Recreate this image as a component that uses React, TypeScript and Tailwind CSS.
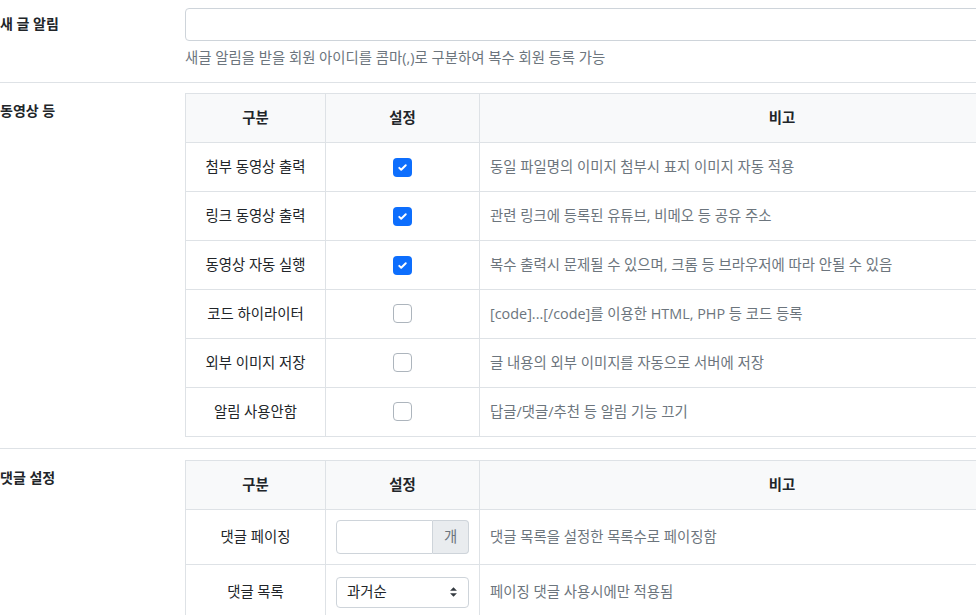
import React from 'react';

const font = { fontFamily: '"Open Sans", "Noto Sans CJK KR", sans-serif' };

function CheckBox({ checked }: { checked: boolean }) {
  if (checked) {
    return (
      <span className="inline-flex w-[19px] h-[19px] rounded-[4px] bg-[#0d6efd] items-center justify-center">
        <svg viewBox="0 0 20 20" className="w-[13px] h-[13px]">
          <path d="M5 10.5l3 3 7-7" fill="none" stroke="#fff" strokeWidth="3" strokeLinecap="round" strokeLinejoin="round" />
        </svg>
      </span>
    );
  }
  return <span className="inline-block w-[19px] h-[19px] rounded-[4px] border border-[#adb5bd] bg-white" />;
}

const videoRows = [
  { name: '첨부 동영상 출력', on: true, note: '동일 파일명의 이미지 첨부시 표지 이미지 자동 적용' },
  { name: '링크 동영상 출력', on: true, note: '관련 링크에 등록된 유튜브, 비메오 등 공유 주소' },
  { name: '동영상 자동 실행', on: true, note: '복수 출력시 문제될 수 있으며, 크롬 등 브라우저에 따라 안될 수 있음' },
  { name: '코드 하이라이터', on: false, note: '[code]...[/code]를 이용한 HTML, PHP 등 코드 등록' },
  { name: '외부 이미지 저장', on: false, note: '글 내용의 외부 이미지를 자동으로 서버에 저장' },
  { name: '알림 사용안함', on: false, note: '답글/댓글/추천 등 알림 기능 끄기' },
];

function Head() {
  return (
    <thead>
      <tr className="bg-[#f8f9fa] h-[49px]">
        <th className="w-[140px] border border-[#dee2e6] font-semibold text-[#212529]">구분</th>
        <th className="w-[154px] border border-[#dee2e6] font-semibold text-[#212529]">설정</th>
        <th className="border border-[#dee2e6] font-semibold text-[#212529]">비고</th>
      </tr>
    </thead>
  );
}

export default function App() {
  return (
    <div className="w-[976px] h-[615px] overflow-hidden bg-white text-[14.4px] text-[#212529]" style={font}>
      <div className="w-[1100px]">
        {/* 새 글 알림 */}
        <div className="flex pt-2 pb-[14px] border-b border-[#dee2e6]">
          <div className="w-[185px] shrink-0 pt-[6px] font-bold leading-5 text-[14px]">새 글 알림</div>
          <div className="w-[900px]">
            <input className="block w-full h-[33px] border border-[#ced4da] rounded-[4px] px-3" />
            <p className="mt-[7px] text-[#6c757d] leading-5">새글 알림을 받을 회원 아이디를 콤마(,)로 구분하여 복수 회원 등록 가능</p>
          </div>
        </div>

        {/* 동영상 등 */}
        <div className="flex pt-[10px] pb-[11px] border-b border-[#dee2e6]">
          <div className="w-[185px] shrink-0 pt-[8px] font-bold leading-5 text-[14px]">동영상 등</div>
          <table className="w-[900px] border-collapse">
            <Head />
            <tbody>
              {videoRows.map((r) => (
                <tr key={r.name} className="h-[49px]">
                  <td className="border border-[#dee2e6] text-center">{r.name}</td>
                  <td className="border border-[#dee2e6] text-center align-middle">
                    <span className="inline-flex pt-[4px]">
                      <CheckBox checked={r.on} />
                    </span>
                  </td>
                  <td className="border border-[#dee2e6] px-[10px] text-[#6c757d]">{r.note}</td>
                </tr>
              ))}
            </tbody>
          </table>
        </div>

        {/* 댓글 설정 */}
        <div className="flex pt-[11px]">
          <div className="w-[185px] shrink-0 pt-[8px] font-bold leading-5 text-[14px]">댓글 설정</div>
          <table className="w-[900px] border-collapse">
            <Head />
            <tbody>
              <tr className="h-[55px]">
                <td className="border border-[#dee2e6] text-center">댓글 페이징</td>
                <td className="border border-[#dee2e6] px-[10px]">
                  <div className="flex h-[34px]">
                    <input className="w-[97px] border border-[#ced4da] rounded-l-[4px] px-2" />
                    <span className="flex-1 flex items-center justify-center bg-[#e9ecef] border border-l-0 border-[#ced4da] rounded-r-[4px] text-[#6c757d]">개</span>
                  </div>
                </td>
                <td className="border border-[#dee2e6] px-[10px] text-[#6c757d]">댓글 목록을 설정한 목록수로 페이징함</td>
              </tr>
              <tr className="h-[55px]">
                <td className="border border-[#dee2e6] text-center">댓글 목록</td>
                <td className="border border-[#dee2e6] px-[10px]">
                  <div className="flex items-center justify-between h-[31px] border border-[#ced4da] rounded-[4px] pl-[10px] pr-[10px]">
                    <span>과거순</span>
                    <svg viewBox="0 0 10 14" className="w-[9px] h-[12px]">
                      <path d="M1 5.5L5 1.5L9 5.5Z M1 8.5L5 12.5L9 8.5Z" fill="#343a40" />
                    </svg>
                  </div>
                </td>
                <td className="border border-[#dee2e6] px-[10px] text-[#6c757d]">페이징 댓글 사용시에만 적용됨</td>
              </tr>
            </tbody>
          </table>
        </div>
      </div>
    </div>
  );
}
